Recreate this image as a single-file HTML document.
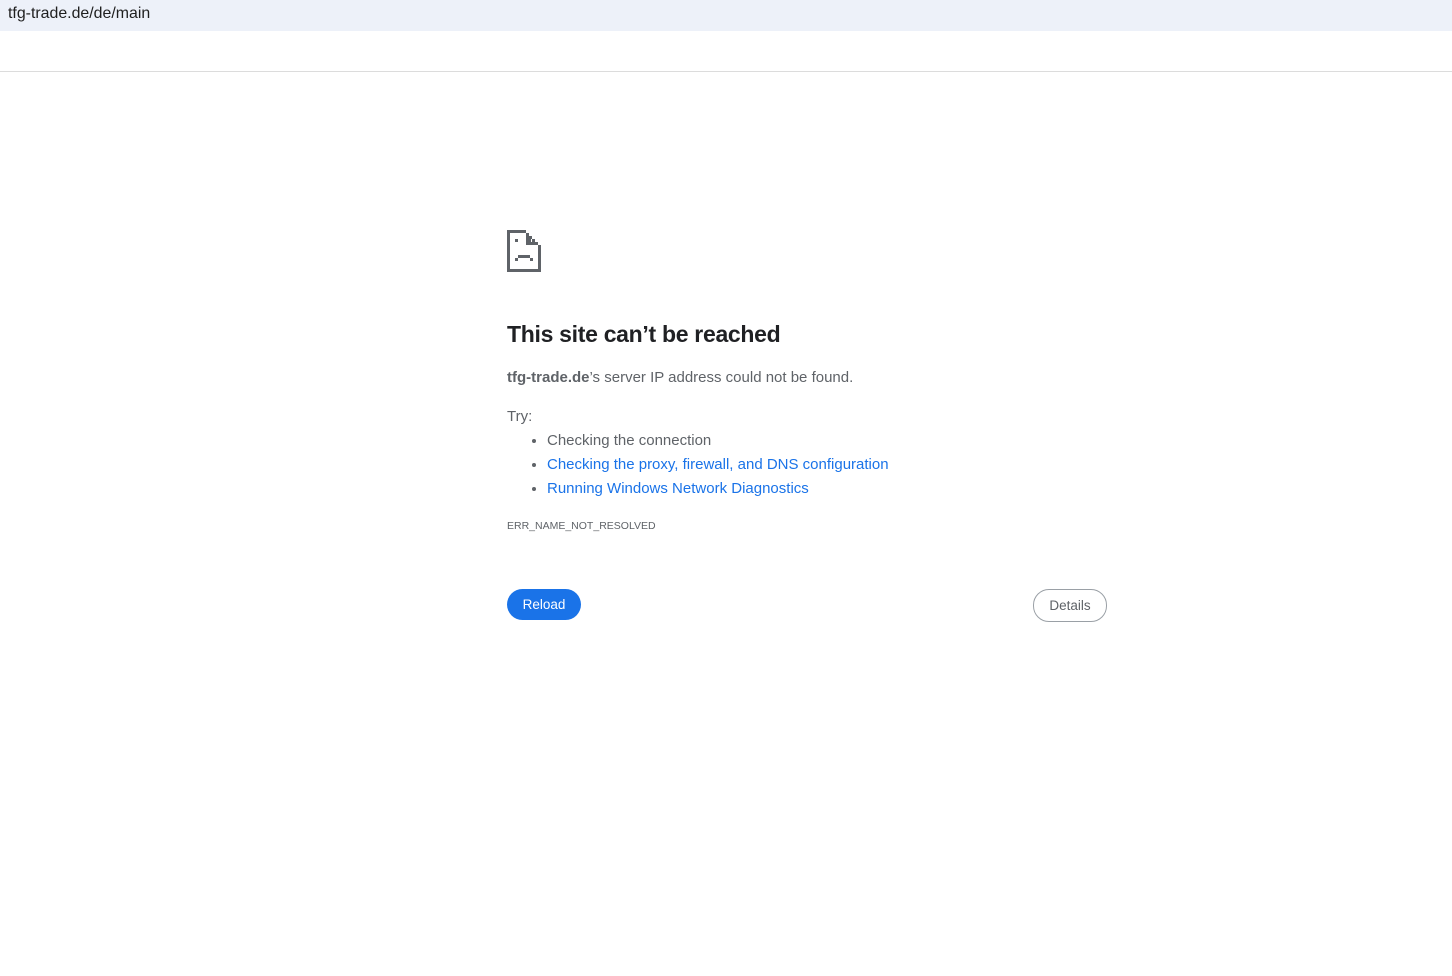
<!DOCTYPE html>
<html><head><meta charset="utf-8"><style>
body{margin:0;width:1452px;height:976px;background:#fff;font-family:"Liberation Sans",sans-serif;position:relative;overflow:hidden}
.bar{position:absolute;left:0;top:0;width:1452px;height:31px;background:#edf1f9}
.url{position:absolute;left:8px;top:5px;font-size:15.9px;color:#1f1f1f}
.line{position:absolute;left:0;top:71px;width:1452px;height:1px;background:#dcdcdc}
.t{position:absolute;left:507px;color:#5f6368;font-size:15px;white-space:nowrap}
h1{position:absolute;left:507px;top:321px;margin:0;font-size:23px;font-weight:600;color:#202124;letter-spacing:-0.3px}
ul{position:absolute;left:507px;top:429px;margin:0;padding-left:40px;font-size:15px;color:#5f6368;line-height:24px}
a{color:#1a73e8;text-decoration:none}
.btn{position:absolute;border-radius:16px;font-size:13.5px;text-align:center;box-sizing:border-box}
</style></head><body>
<div class="bar"><div class="url">tfg-trade.de/de/main</div></div>
<div class="line"></div>
<svg style="position:absolute;left:507px;top:230px" width="34" height="42" viewBox="0 0 34 42" fill="#5f6368" shape-rendering="crispEdges">
<rect x="0" y="0" width="3" height="42"/><rect x="0" y="39" width="34" height="3"/><rect x="31" y="15" width="3" height="27"/>
<rect x="0" y="0" width="19" height="3"/>
<rect x="19" y="3" width="3" height="3"/><rect x="22" y="6" width="3" height="3"/><rect x="25" y="9" width="3" height="3"/><rect x="28" y="12" width="3" height="3"/>
<rect x="19" y="3" width="3" height="12"/><rect x="19" y="12" width="12" height="3"/>
<rect x="8" y="9" width="3" height="3"/><rect x="21" y="9" width="3" height="3"/>
<rect x="8" y="28" width="3" height="3"/><rect x="11" y="25" width="12" height="3"/><rect x="23" y="28" width="3" height="3"/>
</svg>
<h1>This site can’t be reached</h1>
<div class="t" style="top:369px"><b style="color:#5f6368">tfg-trade.de</b>’s server IP address could not be found.</div>
<div class="t" style="top:408px">Try:</div>
<ul><li>Checking the connection</li><li><a>Checking the proxy, firewall, and DNS configuration</a></li><li><a>Running Windows Network Diagnostics</a></li></ul>
<div class="t" style="top:520px;font-size:10.5px">ERR_NAME_NOT_RESOLVED</div>
<div class="btn" style="left:507px;top:589px;width:74px;height:31px;line-height:31px;background:#1a73e8;color:#fff;font-weight:500">Reload</div>
<div class="btn" style="left:1033px;top:589px;width:74px;height:33px;line-height:31px;border:1px solid #9aa0a6;color:#5f6368">Details</div>
</body></html>
